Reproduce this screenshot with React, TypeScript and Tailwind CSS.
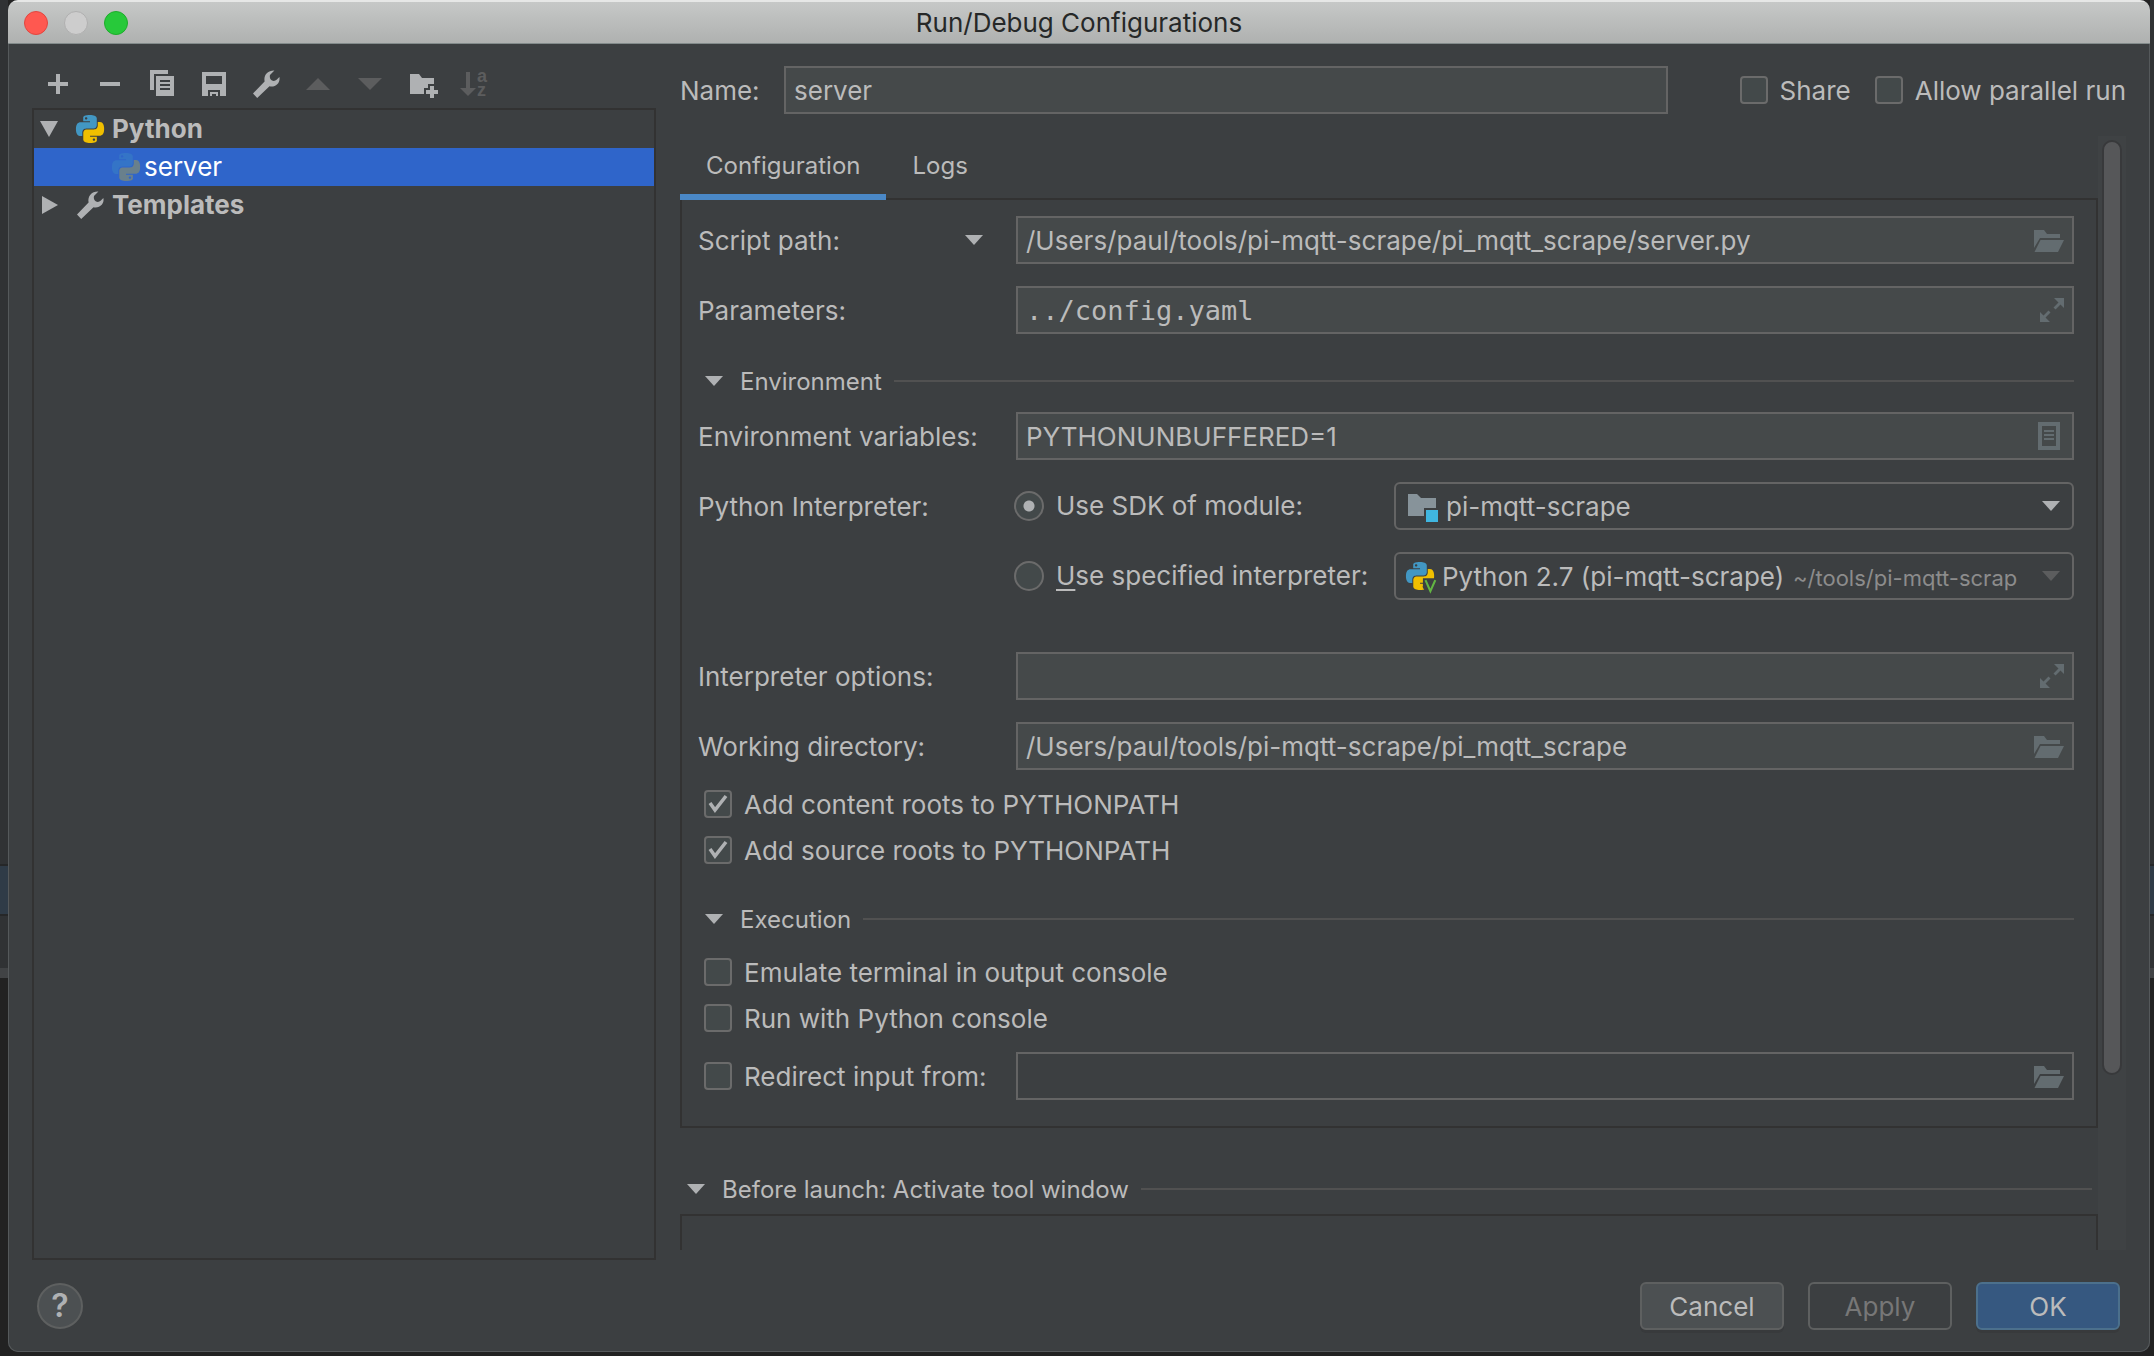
import { ReactNode, useId, useState } from 'react';
import clsx from 'clsx';

interface IconProps {
    className?: string;
}

function PlusIcon() {
    return (
        <svg viewBox="0 0 32 32" className="h-8 w-8" fill="#afb1b3" aria-hidden="true">
            <path d="M14 6h4v8h8v4h-8v8h-4v-8H6v-4h8z" />
        </svg>
    );
}

function MinusIcon() {
    return (
        <svg viewBox="0 0 32 32" className="h-8 w-8" fill="#afb1b3" aria-hidden="true">
            <path d="M6 14h20v4H6z" />
        </svg>
    );
}

function CopyIcon() {
    return (
        <svg viewBox="0 0 32 32" className="h-8 w-8" fill="#afb1b3" aria-hidden="true">
            <path d="M4 2h18v4H8v16H4z" />
            <path
                fillRule="evenodd"
                d="M10 8h18v20H10zM14 12v2h10v-2zM14 16v2h10v-2zM14 20v2h10v-2z"
            />
        </svg>
    );
}

function SaveIcon() {
    return (
        <svg viewBox="0 0 32 32" className="h-8 w-8" fill="#afb1b3" aria-hidden="true">
            <path fillRule="evenodd" d="M4 4h24v24h-6v-6H10v6H4zM8 8v8h16V8z" />
            <path d="M12 24h8v4h-2v-2h-4v2h-2z" />
        </svg>
    );
}

function WrenchIcon({ className = 'h-8 w-8' }: IconProps) {
    return (
        <svg viewBox="0 0 32 32" className={className} fill="#afb1b3" aria-hidden="true">
            <path d="M3 25.5 14.6 13.4C13.4 7 17.6 2.2 24.4 2.4L20 7c-.6 2.200.2 4.600 2 5.500 1.500.8 3.400.5 4.600-.7L29.400 9c1.200 5.800-3.800 10.600-9.900 9.300L7.200 30z" />
        </svg>
    );
}

function MoveUpIcon() {
    return (
        <svg viewBox="0 0 32 32" className="h-8 w-8" fill="#5c5d5e" aria-hidden="true">
            <path d="M16 10l12 12H4z" />
        </svg>
    );
}

function MoveDownIcon() {
    return (
        <svg viewBox="0 0 32 32" className="h-8 w-8" fill="#5c5d5e" aria-hidden="true">
            <path d="M16 22L4 10h24z" />
        </svg>
    );
}

function NewFolderIcon() {
    return (
        <svg viewBox="0 0 32 32" className="h-8 w-8" fill="#afb1b3" aria-hidden="true">
            <path d="M4 6h9l3 4h12v6h-6v4h-4v6H4z" />
            <path d="M24 18h4v4h4v4h-4v4h-4v-4h-4v-4h4z" />
        </svg>
    );
}

function SortIcon() {
    return (
        <svg viewBox="0 0 32 32" className="h-8 w-8 overflow-visible" fill="#5c5d5e" aria-hidden="true">
            <path d="M8 4h4v16h6l-8 8-8-8h6z" />
            <text x="19" y="14" fontFamily="Liberation Sans, sans-serif" fontSize="18" fontWeight="700">
                a
            </text>
            <text x="19" y="28" fontFamily="Liberation Sans, sans-serif" fontSize="18" fontWeight="700">
                z
            </text>
        </svg>
    );
}

function PythonIcon({ className, virtualEnv }: IconProps & { virtualEnv?: boolean }) {
    return (
        <svg viewBox="0 0 24 24" className={clsx('h-7 w-7 shrink-0 overflow-visible', className)} aria-hidden="true">
            <path
                fill="#4297c3"
                d="M14.25.18l.9.2.73.26.59.3.45.32.34.34.25.34.16.33.1.3.04.26.02.2-.01.13V8.500l-.05.63-.13.55-.21.46-.26.38-.3.31-.33.25-.35.19-.35.14-.33.1-.3.07-.26.04-.21.02H8.770l-.69.05-.59.14-.5.22-.41.27-.33.32-.27.35-.2.36-.15.37-.1.35-.07.32-.04.27-.02.21v3.060H3.170l-.21-.03-.28-.07-.32-.12-.35-.18-.36-.26-.36-.36-.35-.46-.32-.59-.28-.73-.21-.88-.14-1.050-.05-1.230.06-1.220.16-1.040.24-.87.32-.71.36-.57.4-.44.42-.33.42-.24.4-.16.36-.1.32-.05.24-.01h.16l.06.01h8.160v-.83H6.180l-.01-2.750-.02-.37.05-.34.11-.31.17-.28.25-.26.31-.23.38-.2.44-.18.51-.15.58-.12.64-.1.71-.06.77-.04.84-.02 1.270.05zm-6.300 1.980l-.23.33-.08.41.08.41.23.34.33.22.41.09.41-.09.33-.22.23-.34.08-.41-.08-.41-.23-.33-.33-.22-.41-.09-.41.09z"
            />
            <path
                fill="#f0bf00"
                d="M21.100 6.110l.28.06.32.12.35.18.36.27.36.35.35.47.32.59.28.73.21.88.14 1.040.05 1.230-.06 1.230-.16 1.040-.24.86-.32.71-.36.57-.4.45-.42.33-.42.24-.4.16-.36.09-.32.05-.24.02-.16-.01h-8.220v.82h5.840l.01 2.760.02.36-.05.34-.11.31-.17.29-.25.25-.31.24-.38.2-.44.17-.51.15-.58.13-.64.09-.71.07-.77.04-.84.01-1.270-.04-1.070-.14-.9-.2-.73-.25-.59-.3-.45-.33-.34-.34-.25-.34-.16-.33-.1-.3-.04-.25-.02-.2.01-.13v-5.340l.05-.64.13-.54.21-.46.26-.38.3-.32.33-.24.35-.2.35-.14.33-.1.3-.06.26-.04.21-.02.13-.01h5.840l.69-.05.59-.14.5-.21.41-.28.33-.32.27-.35.2-.36.15-.36.1-.35.07-.32.04-.28.02-.21V6.070h2.090l.14.01zm-6.470 14.250l-.23.33-.08.41.08.41.23.33.33.23.41.08.41-.08.33-.23.23-.33.08-.41-.08-.41-.23-.33-.33-.23-.41-.08-.41.08z"
            />
            {virtualEnv && (
                <>
                    <path fill="#3c3f41" d="M14.500 14H26v13H17.500l-3-5z" />
                    <path fill="none" stroke="#62b543" strokeWidth="1.800" d="M16.700 15.500l4.200 9.500 4.200-9.500" />
                </>
            )}
        </svg>
    );
}

function ModuleIcon() {
    return (
        <svg viewBox="0 0 32 32" className="h-8 w-8 shrink-0" aria-hidden="true">
            <path fill="#87939a" d="M2 4h9l4 4h15v10H18v8H2z" />
            <path fill="#40b6e0" d="M20 20h12v12H20z" />
        </svg>
    );
}

function OpenFolderIcon() {
    return (
        <svg viewBox="0 0 32 32" className="h-8 w-8" fill="#636c70" aria-hidden="true">
            <path d="M0 6h10l3 4h13v4H6L0 24z" />
            <path d="M6.500 16H30l-6 12H0.500z" />
        </svg>
    );
}

function ExpandIcon() {
    return (
        <svg viewBox="0 0 32 32" className="h-8 w-8" fill="#636c70" aria-hidden="true">
            <path d="M20 4h10v10l-3.500-3.500-5 5-2-2 5-5z" />
            <path d="M16 28H6V18l3.500 3.500 5-5 2 2-5 5z" />
        </svg>
    );
}

function DocumentIcon() {
    return (
        <svg viewBox="0 0 32 32" className="h-8 w-8" fill="#636c70" aria-hidden="true">
            <path fillRule="evenodd" d="M4 2h22v28H4zM8 6v20h14V6z" />
            <path d="M10 10h10v2H10zM10 14h10v2H10zM10 18h10v2H10z" />
        </svg>
    );
}

function Triangle({ className = 'fill-[#afb1b3]' }: IconProps) {
    return (
        <svg viewBox="0 0 18 10" className={clsx('h-[10px] w-[18px] shrink-0', className)} aria-hidden="true">
            <path d="M0 0h18L9 10z" />
        </svg>
    );
}

interface CheckboxProps {
    label: string;
    defaultChecked?: boolean;
}

function Checkbox({ label, defaultChecked = false }: CheckboxProps) {
    const [checked, setChecked] = useState(defaultChecked);

    return (
        <label className="flex h-7 items-center gap-3 whitespace-nowrap leading-7">
            <span className="grid h-7 w-7 shrink-0 place-items-center">
                <input
                    type="checkbox"
                    checked={checked}
                    onChange={(event) => setChecked(event.target.checked)}
                    className="col-start-1 row-start-1 h-7 w-7 appearance-none rounded border-2 border-[#6b6b6b] bg-[#43494a]"
                />
                {checked && (
                    <svg viewBox="0 0 28 28" className="pointer-events-none col-start-1 row-start-1 h-7 w-7" aria-hidden="true">
                        <path d="M6 13l5 7L22 6" fill="none" stroke="#afb1b3" strokeWidth="3.500" />
                    </svg>
                )}
            </span>
            <span className="pt-0.5">{label}</span>
        </label>
    );
}

interface FieldProps {
    id?: string;
    label?: string;
    defaultValue?: string;
    action?: string;
    icon?: ReactNode;
    mono?: boolean;
    disabled?: boolean;
}

function Field({ id, label, defaultValue = '', action, icon, mono, disabled }: FieldProps) {
    return (
        <div
            className={clsx(
                'flex h-12 min-w-0 flex-1 items-center border-2 border-[#646464] pl-2 pr-1.5',
                disabled ? 'bg-[#3c3f41]' : 'bg-[#45494a]'
            )}
        >
            <input
                id={id}
                type="text"
                aria-label={label}
                defaultValue={defaultValue}
                disabled={disabled}
                className={clsx(
                    'h-full min-w-0 flex-1 bg-transparent outline-none',
                    mono && 'font-["DejaVu_Sans_Mono",monospace] text-[27px]'
                )}
            />
            {icon && (
                <button type="button" aria-label={action} className="shrink-0">
                    {icon}
                </button>
            )}
        </div>
    );
}

interface FormRowProps extends FieldProps {
    title: string;
    menu?: boolean;
}

function FormRow({ title, menu, ...field }: FormRowProps) {
    const id = useId();

    return (
        <div className="flex items-center">
            <div className="flex w-[318px] shrink-0 items-center justify-between pr-[33px]">
                <label htmlFor={id} className="pt-0.5">
                    {title}
                </label>
                {menu && (
                    <button type="button" aria-label="Choose target type">
                        <Triangle />
                    </button>
                )}
            </div>
            <Field id={id} {...field} />
        </div>
    );
}

function SectionHeader({ title, className }: { title: string; className?: string }) {
    return (
        <div className={clsx('flex h-[30px] items-center gap-3 pl-[7px]', className)}>
            <button type="button" aria-expanded="true" className="flex items-center gap-[17px] text-2xl leading-[30px]">
                <Triangle />
                <span className="pt-0.5">{title}</span>
            </button>
            <span className="h-0.5 flex-1 bg-[#515151]" />
        </div>
    );
}

interface SdkRowProps {
    children: ReactNode;
    checked: boolean;
    onSelect: () => void;
    combo: ReactNode;
}

function SdkRow({ children, checked, onSelect, combo }: SdkRowProps) {
    return (
        <div className="flex items-center">
            <label className="flex w-[380px] shrink-0 items-center gap-3 whitespace-nowrap">
                <input
                    type="radio"
                    name="interpreter"
                    checked={checked}
                    onChange={onSelect}
                    className="h-[30px] w-[30px] shrink-0 appearance-none rounded-full border-2 border-[#6b6b6b] bg-[#43494a] checked:bg-[radial-gradient(circle,#afb1b3_5px,#43494a_6px)]"
                />
                <span>{children}</span>
            </label>
            {combo}
        </div>
    );
}

const toolbar = [
    { name: 'Add New Configuration', icon: <PlusIcon /> },
    { name: 'Remove Configuration', icon: <MinusIcon /> },
    { name: 'Copy Configuration', icon: <CopyIcon /> },
    { name: 'Save Configuration', icon: <SaveIcon /> },
    { name: 'Edit Templates', icon: <WrenchIcon /> },
    { name: 'Move Up', icon: <MoveUpIcon />, disabled: true },
    { name: 'Move Down', icon: <MoveDownIcon />, disabled: true },
    { name: 'Create New Folder', icon: <NewFolderIcon /> },
    { name: 'Sort Configurations', icon: <SortIcon />, disabled: true },
];

function Sidebar() {
    return (
        <aside className="flex w-[624px] shrink-0 flex-col">
            <div className="flex gap-5 pb-2 pl-2.5 pt-6">
                {toolbar.map((item) => (
                    <button key={item.name} type="button" aria-label={item.name} disabled={item.disabled}>
                        {item.icon}
                    </button>
                ))}
            </div>
            <ul className="flex-1 border-2 border-[#323232]" role="tree">
                <li role="treeitem" aria-expanded="true">
                    <div className="flex h-[38px] items-center pl-1.5 font-bold">
                        <svg viewBox="0 0 18 16" className="h-4 w-[18px]" fill="#afb1b3" aria-hidden="true">
                            <path d="M0 0h18L9 16z" />
                        </svg>
                        <PythonIcon className="ml-[18px] mr-2" />
                        Python
                    </div>
                    <ul role="group">
                        <li
                            role="treeitem"
                            aria-selected="true"
                            className="flex h-[38px] items-center gap-1 bg-[#2f65ca] pl-[78px] text-white"
                        >
                            <PythonIcon className="opacity-30" />
                            server
                        </li>
                    </ul>
                </li>
                <li role="treeitem" aria-expanded="false" className="flex h-[38px] items-center pl-2 font-bold">
                    <svg viewBox="0 0 16 18" className="h-[18px] w-4" fill="#afb1b3" aria-hidden="true">
                        <path d="M0 0l16 9-16 9z" />
                    </svg>
                    <WrenchIcon className="ml-4 mr-1.5 h-8 w-8" />
                    Templates
                </li>
            </ul>
        </aside>
    );
}

function ConfigurationPanel() {
    const [sdk, setSdk] = useState('module');

    return (
        <div role="tabpanel" className="border-2 border-[#323232] pb-[26px] pl-4 pr-[22px] pt-4">
            <div className="flex flex-col gap-[22px]">
                <FormRow
                    title="Script path:"
                    menu
                    defaultValue="/Users/paul/tools/pi-mqtt-scrape/pi_mqtt_scrape/server.py"
                    action="Browse script"
                    icon={<OpenFolderIcon />}
                />
                <FormRow title="Parameters:" mono defaultValue="../config.yaml" action="Expand" icon={<ExpandIcon />} />
            </div>

            <SectionHeader title="Environment" className="mb-4 mt-8" />
            <div className="flex flex-col gap-[22px]">
                <FormRow
                    title="Environment variables:"
                    defaultValue="PYTHONUNBUFFERED=1"
                    action="Edit environment variables"
                    icon={<DocumentIcon />}
                />
                <div className="flex" role="radiogroup" aria-label="Python Interpreter">
                    <span className="w-[316px] shrink-0 leading-[50px]">Python Interpreter:</span>
                    <div className="flex min-w-0 flex-1 flex-col gap-[22px]">
                        <SdkRow
                            checked={sdk === 'module'}
                            onSelect={() => setSdk('module')}
                            combo={
                                <div className="flex h-12 min-w-0 flex-1 items-center gap-2 rounded-md border-2 border-[#646464] pl-2.5 pr-3">
                                    <ModuleIcon />
                                    <select aria-label="Module" className="min-w-0 flex-1 appearance-none bg-transparent pt-0.5 outline-none">
                                        <option>pi-mqtt-scrape</option>
                                    </select>
                                    <Triangle />
                                </div>
                            }
                        >
                            Use SDK of module:
                        </SdkRow>
                        <SdkRow
                            checked={sdk === 'interpreter'}
                            onSelect={() => setSdk('interpreter')}
                            combo={
                                <div className="flex h-12 min-w-0 flex-1 items-center gap-2 rounded-md border-2 border-[#646464] pl-2.5 pr-3">
                                    <PythonIcon virtualEnv />
                                    <select
                                        aria-label="Interpreter"
                                        disabled={sdk !== 'interpreter'}
                                        className="shrink-0 appearance-none bg-transparent pt-0.5 opacity-100 outline-none"
                                    >
                                        <option>Python 2.7 (pi-mqtt-scrape)</option>
                                    </select>
                                    <span className="min-w-0 flex-1 overflow-hidden whitespace-nowrap pt-1 text-[22px] text-[#8c8c8c]">
                                        ~/tools/pi-mqtt-scrap
                                    </span>
                                    <Triangle className="fill-[#5c5d5e]" />
                                </div>
                            }
                        >
                            <span className="underline decoration-2 underline-offset-4">U</span>se specified interpreter:
                        </SdkRow>
                    </div>
                </div>
            </div>

            <div className="mt-[52px] flex flex-col gap-[22px]">
                <FormRow title="Interpreter options:" action="Expand" icon={<ExpandIcon />} />
                <FormRow
                    title="Working directory:"
                    defaultValue="/Users/paul/tools/pi-mqtt-scrape/pi_mqtt_scrape"
                    action="Browse directory"
                    icon={<OpenFolderIcon />}
                />
            </div>
            <div className="mt-5 flex flex-col items-start gap-[18px] pl-1.5">
                <Checkbox label="Add content roots to PYTHONPATH" defaultChecked />
                <Checkbox label="Add source roots to PYTHONPATH" defaultChecked />
            </div>

            <SectionHeader title="Execution" className="mb-6 mt-10" />
            <div className="flex flex-col items-start gap-[18px] pl-1.5">
                <Checkbox label="Emulate terminal in output console" />
                <Checkbox label="Run with Python console" />
            </div>
            <div className="mt-5 flex items-center">
                <div className="w-[318px] shrink-0 pl-1.5">
                    <Checkbox label="Redirect input from:" />
                </div>
                <Field label="Input file" disabled action="Browse input file" icon={<OpenFolderIcon />} />
            </div>
        </div>
    );
}

function Editor() {
    const nameId = useId();

    return (
        <section className="flex min-w-0 flex-1 flex-col pb-2.5 pr-6 pt-[22px]">
            <div className="flex items-center">
                <label htmlFor={nameId} className="w-[104px] shrink-0 pt-0.5">
                    Name:
                </label>
                <Field id={nameId} defaultValue="server" />
                <div className="ml-[72px] flex gap-6">
                    <Checkbox label="Share" />
                    <Checkbox label="Allow parallel run" />
                </div>
            </div>

            <div className="mt-[22px] flex min-h-0 flex-1">
                <div className="flex min-w-0 flex-1 flex-col overflow-hidden">
                    <div role="tablist" className="z-10 -mb-0.5 flex h-16 shrink-0 text-2xl">
                        <button type="button" role="tab" aria-selected="true" className="border-b-6 border-[#4a88c7] px-[26px] pt-0.5">
                            Configuration
                        </button>
                        <button type="button" role="tab" aria-selected="false" className="border-b-6 border-transparent px-[26px] pt-0.5">
                            Logs
                        </button>
                    </div>
                    <ConfigurationPanel />
                    <SectionHeader title="Before launch: Activate tool window" className="mb-2.5 mr-1.5 mt-[46px] shrink-0" />
                    <div className="min-h-9 flex-1 border-2 border-b-0 border-[#323232]" />
                </div>
                <div className="flex w-7 shrink-0 flex-col bg-[#3f4244] px-1 pb-[175px] pt-1">
                    <div className="flex-1 rounded-full border-2 border-[#38393b] bg-[#565759]" />
                </div>
            </div>
        </section>
    );
}

function Footer() {
    return (
        <footer className="flex h-[92px] shrink-0 items-center gap-6 pl-[29px] pr-[30px]">
            <button
                type="button"
                aria-label="Help"
                className="mr-auto h-[46px] w-[46px] rounded-full border-2 border-[#5e6060] bg-[#4c5052] text-[32px] font-semibold leading-none text-[#afb1b3]"
            >
                ?
            </button>
            <button type="button" className="h-12 w-36 rounded-md border-2 border-[#5e6060] bg-[#4c5052] pt-0.5 shadow-[0_3px_0_#383a3c]">
                Cancel
            </button>
            <button type="button" disabled className="h-12 w-36 rounded-md border-2 border-[#5e6060] pt-0.5 text-[#777777]">
                Apply
            </button>
            <button type="button" className="h-12 w-36 rounded-md border-2 border-[#4c708c] bg-[#365880] pt-0.5 shadow-[0_3px_0_#383a3c]">
                OK
            </button>
        </footer>
    );
}

// Slice of the editor window that shows behind the dialog
function Backdrop({ className }: { className: string }) {
    return (
        <div className={clsx('flex shrink-0 flex-col', className)} aria-hidden="true">
            <div className="h-[864px] bg-[#303234]" />
            <div className="h-[52px] border-y-2 border-[#262728] bg-[#2f3b47]" />
            <div className="h-[52px] bg-[#303234]" />
            <div className="h-2.5 bg-[#414345]" />
        </div>
    );
}

export default function App() {
    return (
        <div className='flex h-screen min-h-[1356px] bg-[#222222] font-["Inter","Liberation_Sans",sans-serif] text-[26px] leading-[32px] text-[#bbbbbb]'>
            <Backdrop className="w-2" />
            <main className="mb-1 flex min-w-0 flex-1 flex-col overflow-hidden rounded-[10px] bg-[#3c3f41] shadow-[inset_0_0_0_1px_#55595b]">
                <header className="grid h-11 shrink-0 grid-cols-[1fr_auto_1fr] items-center border-b border-t-2 border-b-[#838b8b] border-t-[#e6e7e6] bg-linear-to-b from-[#c6c8c7] to-[#afb1b0] px-4">
                    <div className="flex gap-4">
                        <button type="button" aria-label="Close" className="h-6 w-6 rounded-full border border-[#e2463f] bg-[#ff5850]" />
                        <button type="button" aria-label="Minimize" className="h-6 w-6 rounded-full border border-[#b0b0b0] bg-[#cdcdcd]" />
                        <button type="button" aria-label="Zoom" className="h-6 w-6 rounded-full border border-[#1dad2b] bg-[#27c93a]" />
                    </div>
                    <h1 className="text-[#262828]">Run/Debug Configurations</h1>
                </header>
                <div className="flex min-h-0 flex-1 gap-6 pl-6">
                    <Sidebar />
                    <Editor />
                </div>
                <Footer />
            </main>
            <Backdrop className="w-1" />
        </div>
    );
}
